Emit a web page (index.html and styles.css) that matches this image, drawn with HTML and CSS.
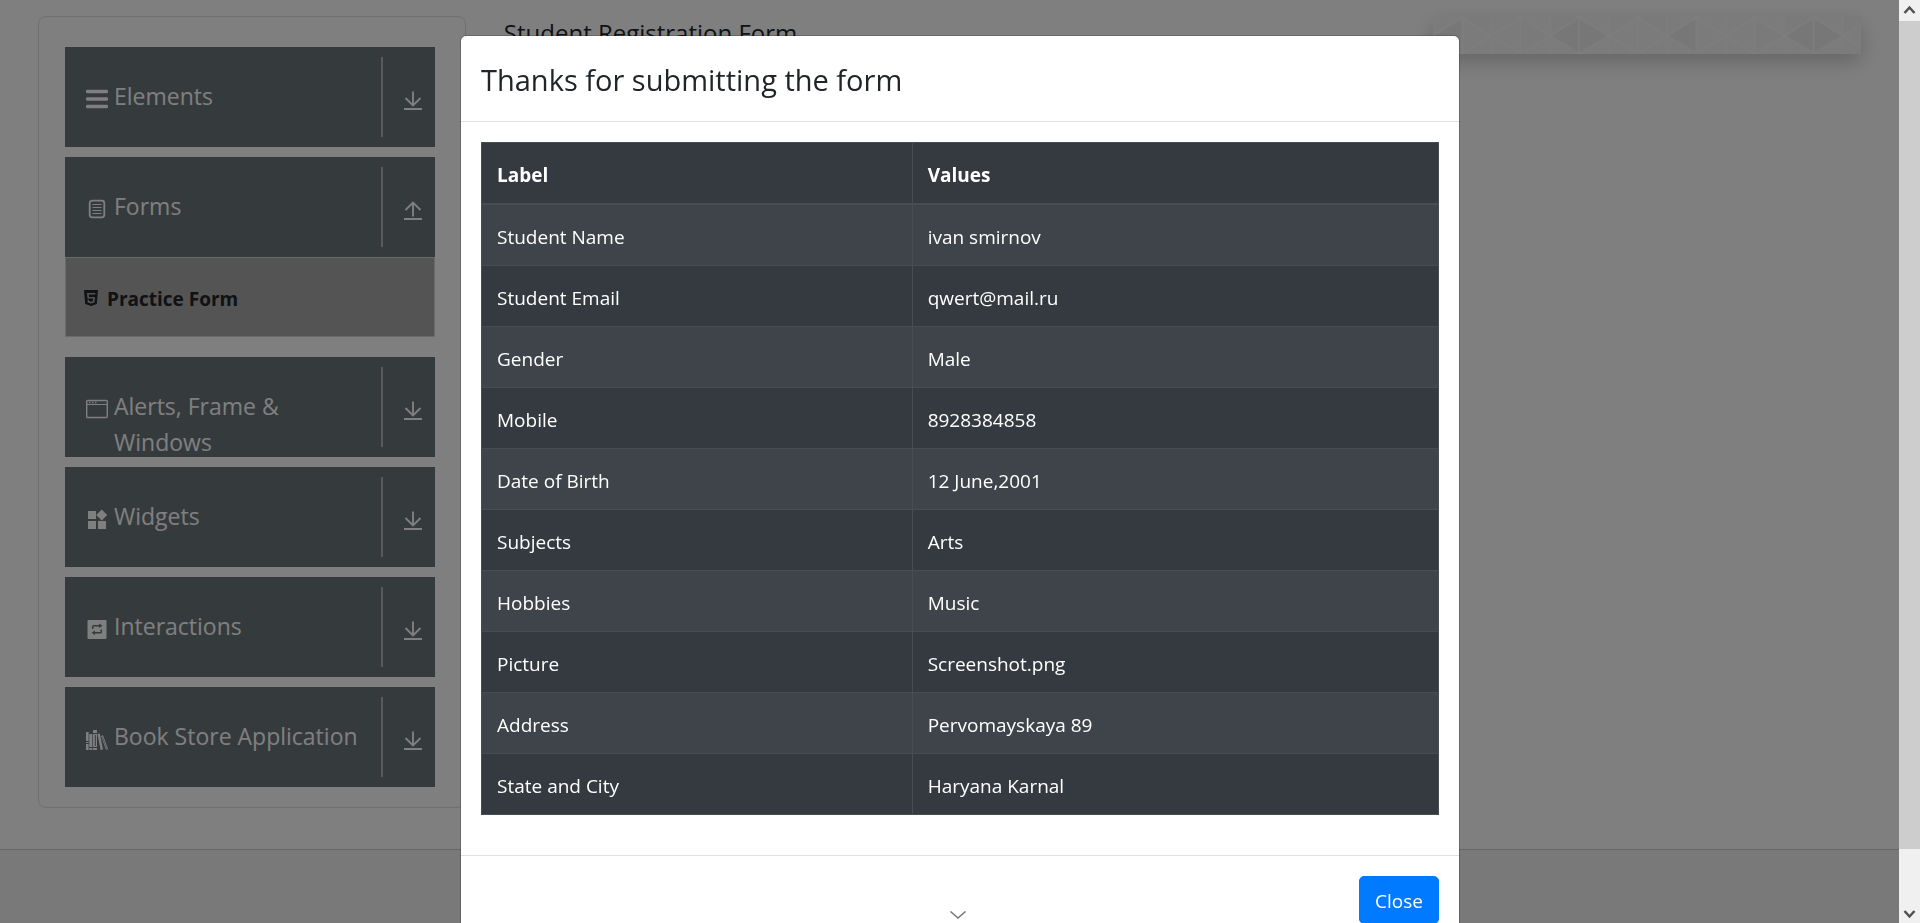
FILE: index.html
```html
<!DOCTYPE html>
<html lang="en">
<head>
<meta charset="utf-8">
<title>Student Registration Form</title>
<link rel="stylesheet" href="styles.css">
</head>
<body>
<svg class="defs" aria-hidden="true">
  <symbol id="down" viewBox="0 0 20 20"><path d="M10 .5v14M2.500 7 10 14.500 17.500 7" fill="none" stroke="currentColor" stroke-width="1.900"/><path d="M1 18h18" stroke="currentColor" stroke-width="2"/></symbol>
  <symbol id="up" viewBox="0 0 20 20"><path d="M10 15.500v-14M2.500 9 10 1.500 17.500 9" fill="none" stroke="currentColor" stroke-width="1.900"/><path d="M1 18h18" stroke="currentColor" stroke-width="2"/></symbol>
</svg>
<div class="page">
  <main class="columns">
    <nav class="sidebar">
      <button class="group" type="button">
        <svg class="icon" viewBox="0 0 22 22"><path d="M1.500 3.500h19M1.500 11h19M1.500 18.500h19" stroke="currentColor" stroke-width="3.400" stroke-linecap="round"/></svg>
        <span class="label">Elements</span>
        <span class="toggle"><svg class="arrow"><use href="#down"/></svg></span>
      </button>
      <div class="open-group">
        <button class="group" type="button">
          <svg class="icon" viewBox="0 0 22 22"><rect x="3.700" y="2.700" width="14.600" height="16.600" rx="2.500" fill="none" stroke="currentColor" stroke-width="1.800"/><path d="M6.500 6.500h9M6.500 9.500h9M6.500 12.500h9M6.500 15.500h9" stroke="currentColor" stroke-width="1"/></svg>
          <span class="label">Forms</span>
          <span class="toggle"><svg class="arrow"><use href="#up"/></svg></span>
        </button>
        <a class="sub-item" href="#">
          <svg class="sub-icon" viewBox="0 0 14 16"><path fill="currentColor" fill-rule="evenodd" d="M0 0h14l-1.200 14L7 16l-5.800-2ZM3 3l.5 5.500h5.600l-.2 2.600L7 11.700l-1.900-.6-.1-1.300H3.500l.2 2.600L7 13.500l3.400-1.100L11 7H5l-.2-2.400h6.400L11.300 3Z"/></svg>
          <span>Practice Form</span>
        </a>
      </div>
      <button class="group" type="button">
        <svg class="icon" viewBox="0 0 22 22"><rect x=".7" y="2.500" width="20.600" height="17" rx="1" fill="none" stroke="currentColor" stroke-width="1.400"/><path d="M1 6.500h20" stroke="currentColor"/><path d="M3 4.500h1.500M6 4.500h1.500M9 4.500h1.500" stroke="currentColor" stroke-width="1.300"/></svg>
        <span class="label">Alerts, Frame &amp; Windows</span>
        <span class="toggle"><svg class="arrow"><use href="#down"/></svg></span>
      </button>
      <button class="group" type="button">
        <svg class="icon" viewBox="0 0 22 22"><path fill="currentColor" d="M2 3h8v8H2ZM2 13h8v8H2ZM12 13h8v8h-8ZM15.700 1.500l5.500 5.500-5.500 5.500L10.200 7Z"/></svg>
        <span class="label">Widgets</span>
        <span class="toggle"><svg class="arrow"><use href="#down"/></svg></span>
      </button>
      <button class="group" type="button">
        <svg class="icon" viewBox="0 0 22 22"><path fill="currentColor" fill-rule="evenodd" d="M2.500 2h17q1 0 1 1v17q0 1-1 1h-17q-1 0-1-1V3q0-1 1-1ZM6 11h1.500V8.500H13V10l3.500-2.300L13 5.500V7H7.500Q6 7 6 8.500ZM16 11.500h-1.500V14H9v-1.500L5.500 14.800 9 17v-1.500h5.500q1.500 0 1.500-1.500Z"/></svg>
        <span class="label">Interactions</span>
        <span class="toggle"><svg class="arrow"><use href="#down"/></svg></span>
      </button>
      <button class="group" type="button">
        <svg class="icon" viewBox="0 0 22 22"><path fill="currentColor" fill-rule="evenodd" d="M0 4h2.600v18H0ZM0 13v1h2.600v-1ZM0 15v1h2.600v-1ZM3.300 6h3v16h-3ZM3.300 19v1h3v-1ZM7 2h4v20H7ZM7 5v1h4V5ZM8.800 7v11h1V7ZM7 19v1h4v-1ZM11.500 6l2.300-.5L17 21.500l-2.400.5ZM15 8l2-.7L22 21l-2 .7ZM16 8.700l4.500 12 .4-.2-4.400-12Z"/></svg>
        <span class="label">Book Store Application</span>
        <span class="toggle"><svg class="arrow"><use href="#down"/></svg></span>
      </button>
    </nav>
    <h1 class="form-title">Student Registration Form</h1>
    <svg class="banner" viewBox="0 0 428 38" preserveAspectRatio="none" aria-hidden="true">
      <defs>
        <pattern id="tri" x="-0.300" width="58.600" height="36" y="1.700" patternUnits="userSpaceOnUse">
          <path d="M0 18 29.300 0 58.600 18 29.300 36ZM29.300 0v36M0 0v36M58.600 0v36" fill="none" stroke="#fbfbfb" stroke-width="1.600"/>
        </pattern>
      </defs>
      <path fill="#f7f7f7" d="M0 0h428v38H0Z"/>
      <path fill="#f4f4f4" d="M29 0h29v19ZM87 0v38l30-19ZM117 0h29v1L117 19ZM176 0h29l-29 19ZM205 0h29v19ZM322 2v36l30-18ZM352 0h29l-29 19ZM411 0h17v10l-17 8Z"/>
      <path fill="#efefef" d="M0 20 29 2v36ZM117 20l29-18 29 18-29 18ZM234 20l29-18v36ZM352 20l29-18 29 18-29 18Z"/>
      <path fill="url(#tri)" d="M0 0h428v38H0Z"/>
    </svg>
  </main>
  <footer class="page-footer"></footer>
</div>

<div class="backdrop">
  <section class="modal" role="dialog" aria-labelledby="modal-title">
    <header class="modal-header"><h2 class="modal-title" id="modal-title">Thanks for submitting the form</h2></header>
    <div class="modal-body">
      <table class="results">
        <thead><tr><th>Label</th><th>Values</th></tr></thead>
        <tbody>
          <tr><td>Student Name</td><td>ivan smirnov</td></tr>
          <tr><td>Student Email</td><td>qwert@mail.ru</td></tr>
          <tr><td>Gender</td><td>Male</td></tr>
          <tr><td>Mobile</td><td>8928384858</td></tr>
          <tr><td>Date of Birth</td><td>12 June,2001</td></tr>
          <tr><td>Subjects</td><td>Arts</td></tr>
          <tr><td>Hobbies</td><td>Music</td></tr>
          <tr><td>Picture</td><td>Screenshot.png</td></tr>
          <tr><td>Address</td><td>Pervomayskaya 89</td></tr>
          <tr><td>State and City</td><td>Haryana Karnal</td></tr>
        </tbody>
      </table>
    </div>
    <footer class="modal-footer"><button class="close" type="button">Close</button></footer>
  </section>
</div>

<svg class="expand" viewBox="0 0 16 8" aria-hidden="true"><path d="M.5.500 8 7 15.500.5" fill="none" stroke="#777" stroke-width="1.500"/></svg>

<div class="scrollbar" aria-hidden="true">
  <svg class="scroll-arrow" viewBox="0 0 21 21"><path d="m5.500 13 5-5.500 5 5.500" fill="none" stroke="#505050" stroke-width="2.500"/></svg>
  <div class="scroll-thumb"></div>
  <div class="scroll-track"></div>
  <svg class="scroll-arrow" viewBox="0 0 21 21"><path d="m5.500 9 5 5.500 5-5.500" fill="none" stroke="#505050" stroke-width="2.500"/></svg>
</div>
</body>
</html>
```
FILE: styles.css
```css
* { box-sizing: border-box; }

html, body { height: 100%; }

body {
  margin: 0;
  overflow: hidden;
  background: #fff;
  color: #212529;
  font: 19px/30px "Open Sans", "Noto Sans", sans-serif;
}

button { font: inherit; }

.defs { position: absolute; width: 0; height: 0; }

.page {
  display: flex;
  flex-direction: column;
  min-height: 100%;
  padding-right: 21px;
}

.columns {
  display: grid;
  grid-template-columns: 12fr 25fr 12fr;
  gap: 38px;
  align-items: start;
  padding: 16px 38px 41px;
}

.sidebar {
  display: flex;
  flex-direction: column;
  gap: 10px;
  padding: 30px 30px 20px 26px;
  border: 1px solid #dfdfdf;
  border-radius: 8px;
}

.group {
  display: flex;
  align-items: flex-start;
  width: 100%;
  height: 100px;
  padding: 10px 12px 10px 21px;
  border: 0;
  background: #6b757b;
  color: #fff;
  font-size: 23px;
  line-height: 36px;
  text-align: left;
}

.icon { flex: none; width: 22px; height: 22px; margin-top: 31px; }

.label { flex: 1; padding: 21px 16px 0 6px; }

.toggle {
  display: flex;
  align-items: center;
  justify-content: flex-end;
  flex: none;
  width: 42px;
  height: 80px;
  padding-top: 7px;
  border-left: 2px solid #b4b4b4;
}

.arrow { width: 20px; height: 20px; }

.open-group { margin-bottom: 10px; }

.sub-item {
  display: flex;
  align-items: center;
  gap: 9px;
  height: 80px;
  padding: 4px 18px 0;
  border: 1px solid #d2d6da;
  background: #a8a8a8;
  color: #212529;
  font-weight: 700;
  text-decoration: none;
}

.sub-icon { width: 14px; height: 16px; margin-bottom: 3px; }

.form-title {
  margin: 0;
  font-size: 24px;
  font-weight: 400;
  line-height: 34px;
}

.banner {
  width: 100%;
  height: 38px;
  box-shadow: 0 8px 20px rgba(0, 0, 0, .2);
}

.page-footer {
  flex: 1;
  border-top: 1px solid #cfcfcf;
  background: #f2f2f2;
}

.backdrop {
  position: fixed;
  inset: 0;
  overflow: hidden;
  padding-top: 35px;
  background: rgba(0, 0, 0, .5);
}

.modal {
  max-width: 1000px;
  margin: 0 auto;
  border: 1px solid rgba(0, 0, 0, .2);
  border-radius: 6px;
  background: #fff;
  background-clip: padding-box;
}

.modal-header { padding: 21px 20px 19px; border-bottom: 1px solid #dee2e6; }

.modal-title {
  margin: 0;
  font-size: 29px;
  font-weight: 400;
  line-height: 45px;
}

.modal-body { padding: 20px 20px 40px; }

.results {
  width: 100%;
  border-collapse: collapse;
  table-layout: fixed;
  border: 1px solid #454d55;
  background: #343a40;
  color: #fff;
  text-align: left;
}

.results th, .results td { padding: 17px 15px 13px; border: 1px solid #454d55; }
.results th { width: 45%; border-bottom-width: 2px; }
.results th + th { width: 55%; }
.results tbody tr:nth-child(odd) { background: #3e444a; }

.modal-footer {
  display: flex;
  justify-content: flex-end;
  padding: 20px;
  border-top: 1px solid #dee2e6;
}

.close {
  padding: 9px 15px 7px;
  border: 1px solid #007bff;
  border-radius: 5px;
  background: #007bff;
  color: #fff;
}

.expand {
  position: fixed;
  bottom: 4px;
  left: 50%;
  width: 16px;
  height: 8px;
  margin-left: -10px;
}

.scrollbar {
  position: fixed;
  top: 0;
  right: 0;
  bottom: 0;
  display: flex;
  flex-direction: column;
  width: 21px;
  background: #f0f0f0;
}

.scroll-arrow { flex: none; height: 21px; }
.scroll-thumb { flex: 828; background: #cdcdcd; }
.scroll-track { flex: 53; }
```
